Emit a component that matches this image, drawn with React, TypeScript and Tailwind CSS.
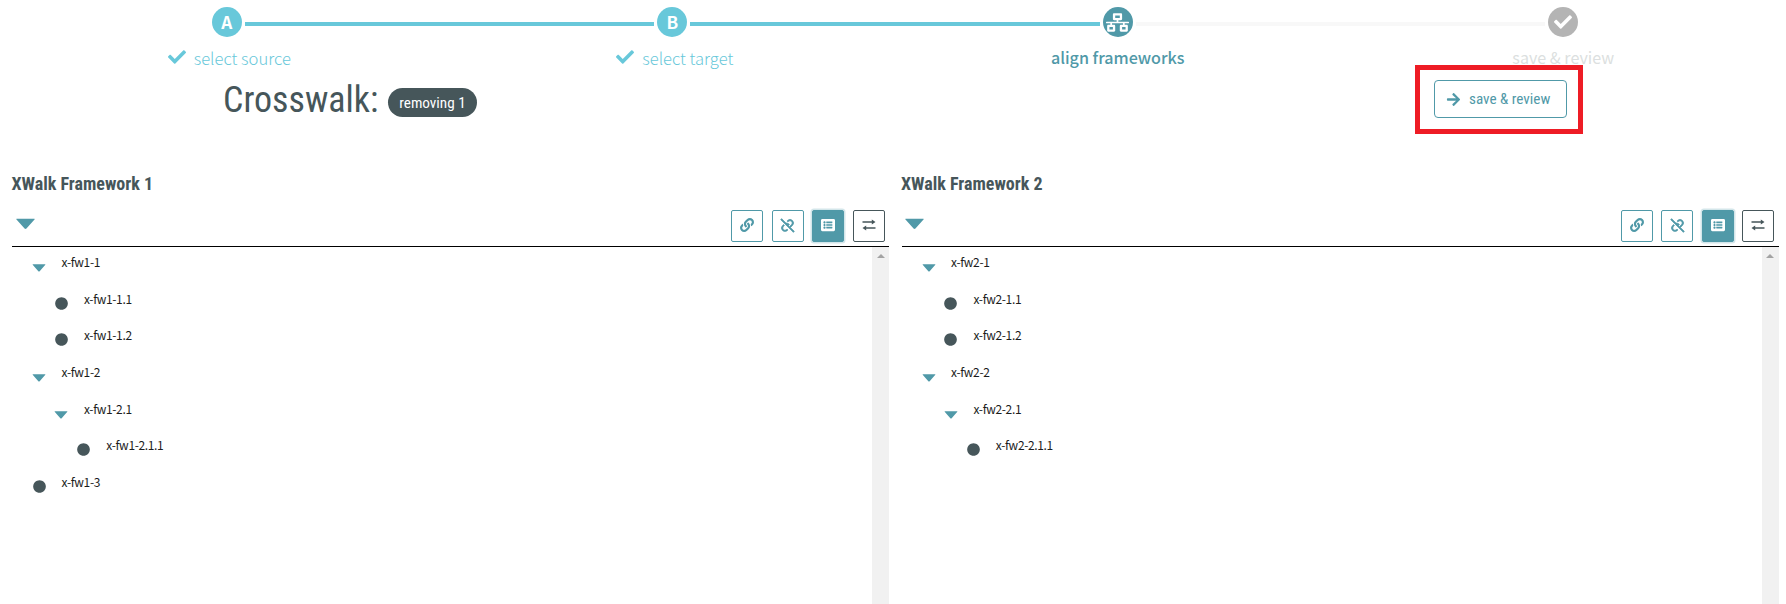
import type { ReactNode } from "react";
import { FaCheck, FaNetworkWired, FaLink, FaListAlt, FaArrowRight, FaCircle } from "react-icons/fa";
import { BiUnlink } from "react-icons/bi";

const SANS = "font-['Noto_Sans_CJK_SC','Noto_Sans',sans-serif]";
const COND = "font-['Roboto_Condensed',Roboto,sans-serif] [font-stretch:75%]";

function Step({ left, right, circle, children, label }: { left: string; right: string; circle: string; children: ReactNode; label: ReactNode }) {
  return (
    <div className="flex flex-1 flex-col items-center">
      <div className="flex w-full items-center">
        <div className={`mt-1 h-1 flex-1 ${left}`} />
        <div className={`mx-[3px] flex size-[30px] items-center justify-center rounded-full text-[17.2px] leading-none font-bold text-white ${circle}`}>{children}</div>
        <div className={`mt-1 h-1 flex-1 ${right}`} />
      </div>
      <div className="mt-[7px] flex h-[26px] items-center text-[16.1px] whitespace-nowrap">{label}</div>
    </div>
  );
}

function DoneLabel({ text }: { text: string }) {
  return (
    <span className="flex items-center pl-[5px] text-[16.6px] font-light text-[#68c8da]">
      <FaCheck className="mr-2 size-[18px]" />
      <span className="pt-[2px]">{text}</span>
    </span>
  );
}

function Caret({ className }: { className: string }) {
  return (
    <svg viewBox="0 0 20 12" className={className} fill="#5099a8">
      <path d="M1 0.4h18c.7 0 .9.5.5.9L11 10.8c-.6.6-1.4.6-2 0L.5 1.3C.1.9.3.4 1 .4z" />
    </svg>
  );
}

function Swap() {
  return (
    <svg viewBox="0 0 14 12" className="h-3 w-[14px]" fill="#46565a">
      <path d="M.5 2.3h9.3V.6L13.5 3 9.8 5.4V3.8H.5zM13.5 8.2H4.2V6.6L.5 9l3.7 2.4V9.7h9.3z" />
    </svg>
  );
}

type Node = { text: string; depth: number; leaf?: boolean };

function Panel({ title, nodes }: { title: string; nodes: Node[] }) {
  const btn = "flex h-8 w-8 items-center justify-center rounded-[2px] border pb-[2px] text-[13px]";
  return (
    <section className="flex w-[877px] flex-col">
      <h2 className={`${COND} -ml-[0.6px] h-[26px] pt-px text-[18px] leading-[26px] font-bold text-[#46565a]`}>{title}</h2>
      <div className="flex h-[51px] items-start justify-between border-b border-black pt-[14px] pr-[4.5px] pl-[3.5px]">
        <Caret className="mt-[8px] h-[12px] w-[19px]" />
        <div className="flex gap-[8.4px] text-[#5099a8]">
          <button className={`${btn} border-[#5099a8]`}><FaLink className="size-[14px]" /></button>
          <button className={`${btn} border-[#5099a8]`}><BiUnlink className="size-[17px]" stroke="currentColor" strokeWidth="0.8" /></button>
          <button className={`${btn} border-[#5099a8] bg-[#5099a8] text-white shadow-[0_0_0_1.5px_#d3e6ea]`}><FaListAlt className="size-[14px]" /></button>
          <button className={`${btn} border-[#46565a]`}><Swap /></button>
        </div>
      </div>
      <div className="flex flex-1">
        <ul className="flex-1">
          {nodes.map((n) => (
            <li key={n.text} className="flex h-[36.7px] items-start" style={{ paddingLeft: 20 + n.depth * 22.4 }}>
              <span className="mt-[13px] flex h-4 w-[14px] items-center">
                {n.leaf ? <FaCircle className="-mt-[3px] ml-[0.5px] size-[13px] text-[#46565a]" /> : <Caret className="h-[8px] w-[14px]" />}
              </span>
              <span className={`${SANS} ml-[15.5px] pt-[5px] text-[12px] leading-[20px] tracking-[-0.35px] text-[#1c1c1c]`}>{n.text}</span>
            </li>
          ))}
        </ul>
        <div className="flex w-[17px] justify-center bg-[#f1f1f1] pt-[7px]">
          <svg viewBox="0 0 8 4" className="h-1 w-2" fill="#a3a3a3"><path d="M0 4l4-4 4 4z" /></svg>
        </div>
      </div>
    </section>
  );
}

const tree = (p: string): Node[] => [
  { text: `${p}-1`, depth: 0 },
  { text: `${p}-1.1`, depth: 1, leaf: true },
  { text: `${p}-1.2`, depth: 1, leaf: true },
  { text: `${p}-2`, depth: 0 },
  { text: `${p}-2.1`, depth: 1 },
  { text: `${p}-2.1.1`, depth: 2, leaf: true },
];

export default function App() {
  return (
    <div className={`flex h-[604px] w-[1786px] flex-col overflow-hidden bg-white ${SANS}`}>
      <header className="flex h-[71px] shrink-0 pt-[7px] pl-1">
        <Step left="" right="bg-[#68c8da]" circle="bg-[#68c8da]" label={<DoneLabel text="select source" />}>A</Step>
        <Step left="bg-[#68c8da]" right="bg-[#68c8da]" circle="bg-[#68c8da]" label={<DoneLabel text="select target" />}>B</Step>
        <Step left="bg-[#68c8da]" right="bg-[#f8f8f8]" circle="bg-[#5099a8]" label={<span className="font-medium text-[#5099a8]">align frameworks</span>}><FaNetworkWired className="h-[19px] w-[23px]" /></Step>
        <Step left="bg-[#f8f8f8]" right="" circle="bg-[#b4b4b4]" label={<span className="text-[#dcdfe0]">save &amp; review</span>}><FaCheck className="size-[18px]" /></Step>
      </header>
      <div className="-mt-[6px] flex h-[69px] shrink-0 justify-between pr-[203px] pl-[223px]">
        <div className={`flex items-start ${COND}`}>
          <h1 className="mt-[13px] text-[36px] leading-[44px] text-[#46565a]">Crosswalk:</h1>
          <span className="mt-[23px] ml-[10px] flex h-[29px] w-[89px] items-center justify-center rounded-full bg-[#46565a] pt-px pr-px text-[15.2px] text-white">removing 1</span>
        </div>
        <div className="border-[5px] border-[#ee1c25] py-[10px] pr-[11px] pl-[14px]">
          <button className={`${COND} flex h-[38px] w-[133px] items-center rounded-[4px] border border-[#5099a8] pl-[11px] text-[15.2px] text-[#5099a8]`}><FaArrowRight className="mr-2 size-[15px]" />save &amp; review</button>
        </div>
      </div>
      <main className="flex flex-1 gap-[12.5px] pt-[36px] pl-3">
        <Panel title="XWalk Framework 1" nodes={[...tree("x-fw1"), { text: "x-fw1-3", depth: 0, leaf: true }]} />
        <Panel title="XWalk Framework 2" nodes={tree("x-fw2")} />
      </main>
    </div>
  );
}
